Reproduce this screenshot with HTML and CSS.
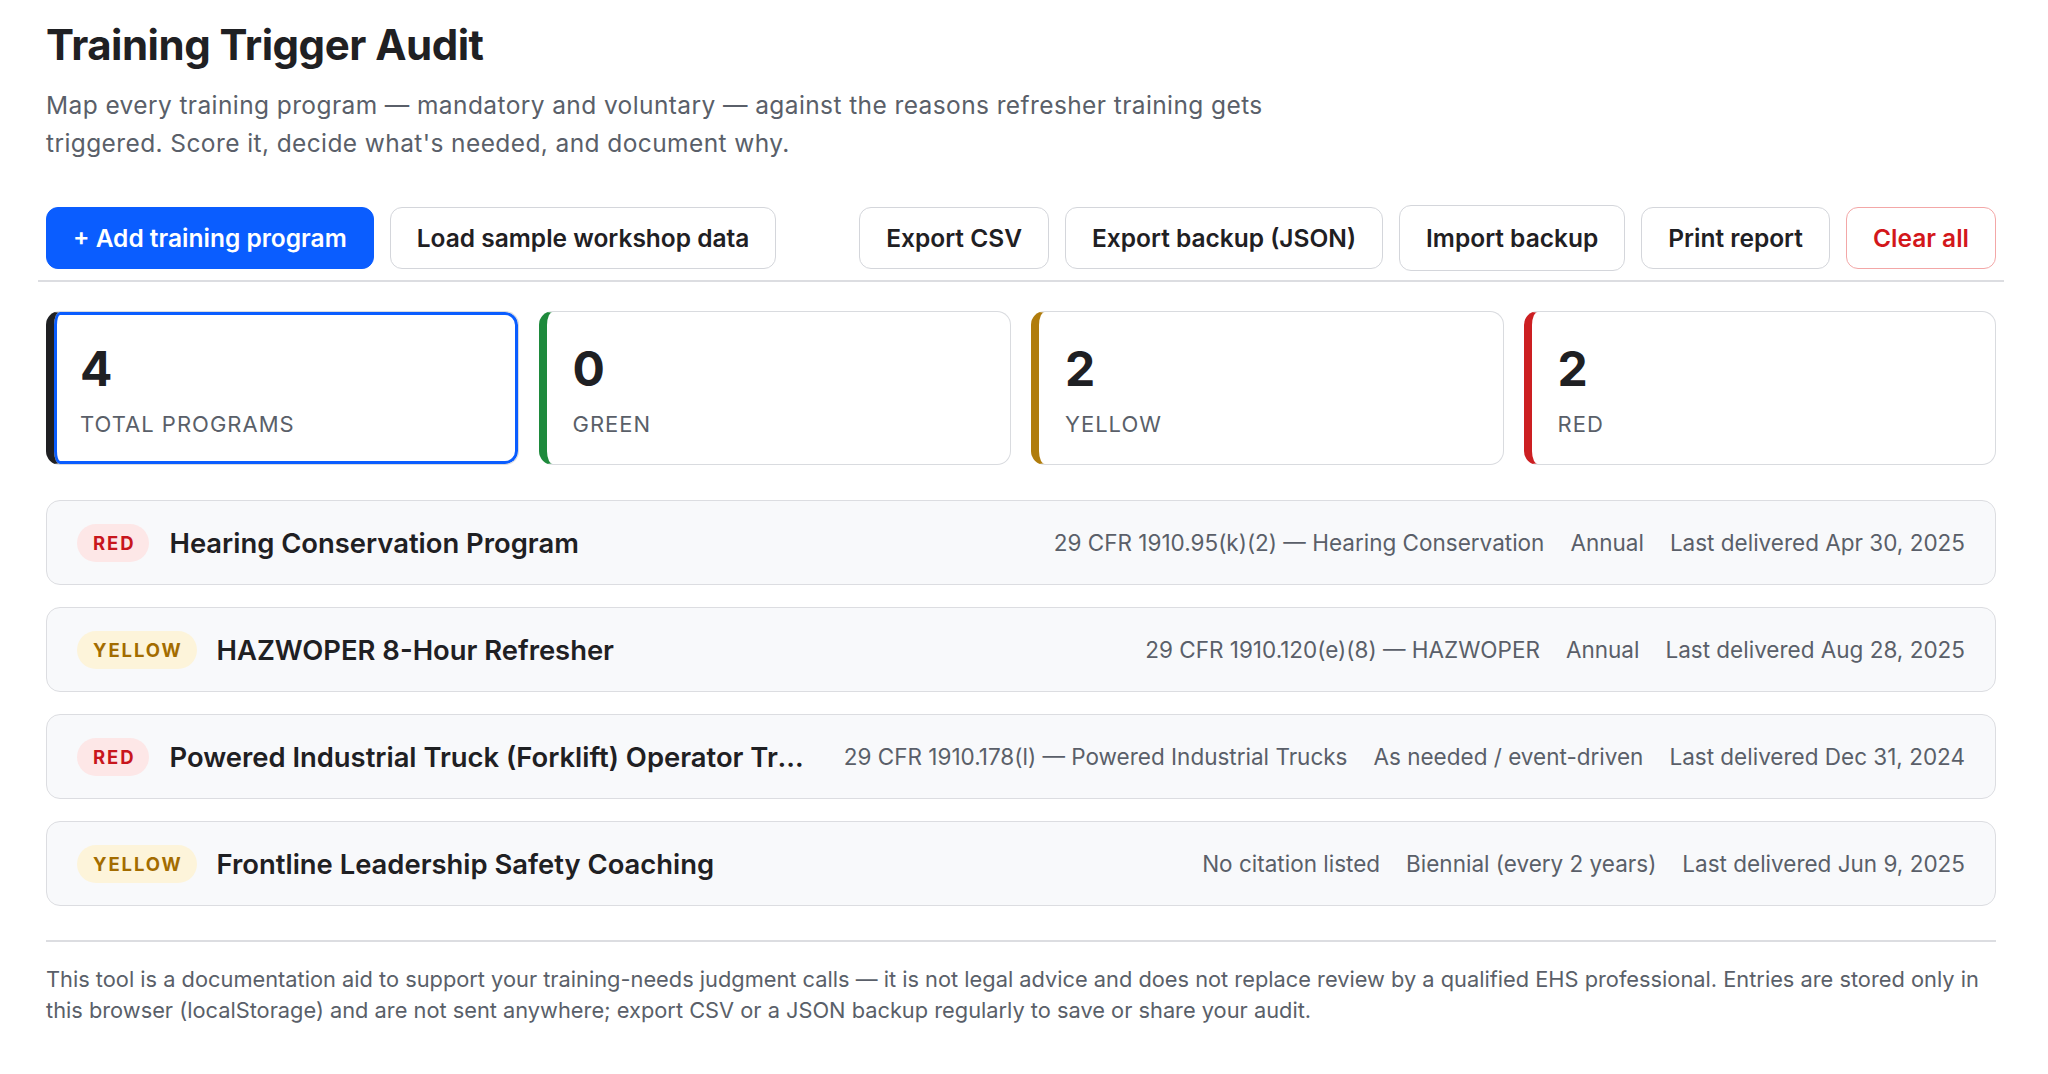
FILE: index.html
```html
<!DOCTYPE html>
<html lang="en">
<head>
    <meta charset="UTF-8">
    <meta name="viewport" content="width=device-width, initial-scale=1.0">
    <title>Training Trigger Audit</title>
    <link rel="stylesheet" href="styles.css">
</head>
<body>
    <div class="page">
        <header class="intro">
            <h1>Training Trigger Audit</h1>
            <p class="lede">Map every training program — mandatory and voluntary — against the reasons refresher training gets triggered. Score it, decide what's needed, and document why.</p>
        </header>

        <div class="toolbar">
            <div class="toolbar-group">
                <button class="btn btn-primary">+ Add training program</button>
                <button class="btn">Load sample workshop data</button>
            </div>
            <div class="toolbar-group toolbar-right">
                <button class="btn">Export CSV</button>
                <button class="btn">Export backup (JSON)</button>
                <label class="btn btn-file">Import backup<input type="file" accept="application/json" hidden></label>
                <button class="btn">Print report</button>
                <button class="btn btn-danger">Clear all</button>
            </div>
        </div>

        <div class="stats">
            <button class="stat stat-total active">
                <span class="stat-value">4</span>
                <span class="stat-label">Total programs</span>
            </button>
            <button class="stat stat-green">
                <span class="stat-value">0</span>
                <span class="stat-label">Green</span>
            </button>
            <button class="stat stat-yellow">
                <span class="stat-value">2</span>
                <span class="stat-label">Yellow</span>
            </button>
            <button class="stat stat-red">
                <span class="stat-value">2</span>
                <span class="stat-label">Red</span>
            </button>
        </div>

        <ul class="program-list">
            <li class="program">
                <span class="badge badge-red">Red</span>
                <span class="program-name">Hearing Conservation Program</span>
                <span class="program-meta">
                    <span>29 CFR 1910.95(k)(2) — Hearing Conservation</span>
                    <span>Annual</span>
                    <span>Last delivered Apr 30, 2025</span>
                </span>
            </li>
            <li class="program">
                <span class="badge badge-yellow">Yellow</span>
                <span class="program-name">HAZWOPER 8-Hour Refresher</span>
                <span class="program-meta">
                    <span>29 CFR 1910.120(e)(8) — HAZWOPER</span>
                    <span>Annual</span>
                    <span>Last delivered Aug 28, 2025</span>
                </span>
            </li>
            <li class="program">
                <span class="badge badge-red">Red</span>
                <span class="program-name">Powered Industrial Truck (Forklift) Operator Training</span>
                <span class="program-meta">
                    <span>29 CFR 1910.178(l) — Powered Industrial Trucks</span>
                    <span>As needed / event-driven</span>
                    <span>Last delivered Dec 31, 2024</span>
                </span>
            </li>
            <li class="program">
                <span class="badge badge-yellow">Yellow</span>
                <span class="program-name">Frontline Leadership Safety Coaching</span>
                <span class="program-meta">
                    <span>No citation listed</span>
                    <span>Biennial (every 2 years)</span>
                    <span>Last delivered Jun 9, 2025</span>
                </span>
            </li>
        </ul>

        <footer class="disclaimer">
            This tool is a documentation aid to support your training-needs judgment calls — it is not legal advice and does not replace review by a qualified EHS professional. Entries are stored only in this browser (localStorage) and are not sent anywhere; export CSV or a JSON backup regularly to save or share your audit.
        </footer>
    </div>
</body>
</html>
```

FILE: styles.css
```css
* {
    box-sizing: border-box;
}

body {
    margin: 0;
    font-family: Inter, "Noto Sans", sans-serif;
    color: #1f2023;
    background: #fff;
}

.page {
    width: 1996px;
    padding: 20px 0 40px 46px;
}

h1 {
    font-size: 42px;
    font-weight: 700;
    line-height: 1.2;
    letter-spacing: -0.5px;
    margin: 0 0 16px;
}

.lede {
    font-size: 24.5px;
    line-height: 38px;
    letter-spacing: 0.4px;
    color: #5a5f69;
    max-width: 1300px;
    margin: 0 0 43px;
}

/* toolbar */
.toolbar {
    display: flex;
    align-items: center;
    margin: 0 -8px;
    padding: 0 8px 9px;
    border-bottom: 2px solid #dcdde1;
}

.toolbar-group {
    display: flex;
    align-items: center;
    gap: 16px;
}

.toolbar-right {
    margin-left: auto;
}

.btn {
    font-family: inherit;
    font-size: 24.5px;
    font-weight: 600;
    line-height: 30px;
    color: #1f2023;
    background: #fff;
    border: 1px solid #d4d6db;
    border-radius: 12px;
    padding: 15px 26px;
    cursor: pointer;
    white-space: nowrap;
}

.btn-primary {
    background: #0a5dff;
    border-color: #0a5dff;
    color: #fff;
}

.btn-file {
    padding: 17px 26px;
}

.btn-danger {
    color: #d3171b;
    border-color: #f3a7a7;
}

/* summary cards */
.stats {
    display: grid;
    grid-template-columns: repeat(4, 1fr);
    gap: 20px;
    margin: 29px 0 35px;
}

.stat {
    display: flex;
    flex-direction: column;
    align-items: flex-start;
    text-align: left;
    font-family: inherit;
    color: #1f2023;
    background: #fff;
    border: 1px solid #d9dbdf;
    border-left: 8px solid #1f2023;
    border-radius: 14px;
    padding: 27px 26px 26px;
    cursor: pointer;
}

.stat.active {
    box-shadow: inset 0 0 0 3px #0a5dff;
}

.stat-green { border-left-color: #1e8a3c; }
.stat-yellow { border-left-color: #b07c0c; }
.stat-red { border-left-color: #cc1f22; }

.stat-value {
    font-size: 48px;
    font-weight: 700;
    line-height: 60px;
}

.stat-label {
    margin-top: 11px;
    font-size: 22px;
    line-height: 28px;
    letter-spacing: 1px;
    text-transform: uppercase;
    color: #5a5f69;
}

/* program rows */
.program-list {
    list-style: none;
    margin: 0 0 34px;
    padding: 0;
    display: flex;
    flex-direction: column;
    gap: 22px;
}

.program {
    display: flex;
    align-items: center;
    gap: 20px;
    height: 85px;
    padding: 0 30px;
    background: #f8f9fb;
    border: 1px solid #dcdde1;
    border-radius: 14px;
}

.badge {
    flex-shrink: 0;
    font-size: 18.5px;
    font-weight: 700;
    line-height: 22px;
    letter-spacing: 1.9px;
    text-transform: uppercase;
    padding: 8px 14px 8px 16px;
    border-radius: 999px;
}

.badge-red {
    color: #c8161d;
    background: #fde7e7;
}

.badge-yellow {
    color: #a36c00;
    background: #fdf4da;
}

.program-name {
    flex: 1;
    min-width: 0;
    font-size: 27.4px;
    font-weight: 600;
    white-space: nowrap;
    overflow: hidden;
    text-overflow: ellipsis;
}

.program-meta {
    flex-shrink: 0;
    display: flex;
    gap: 26px;
    margin-left: 10px;
    font-size: 22.5px;
    color: #5a5f69;
    white-space: nowrap;
}

.disclaimer {
    border-top: 2px solid #dcdde1;
    padding-top: 22px;
    font-size: 21.8px;
    line-height: 31px;
    color: #5a5f69;
}
```
